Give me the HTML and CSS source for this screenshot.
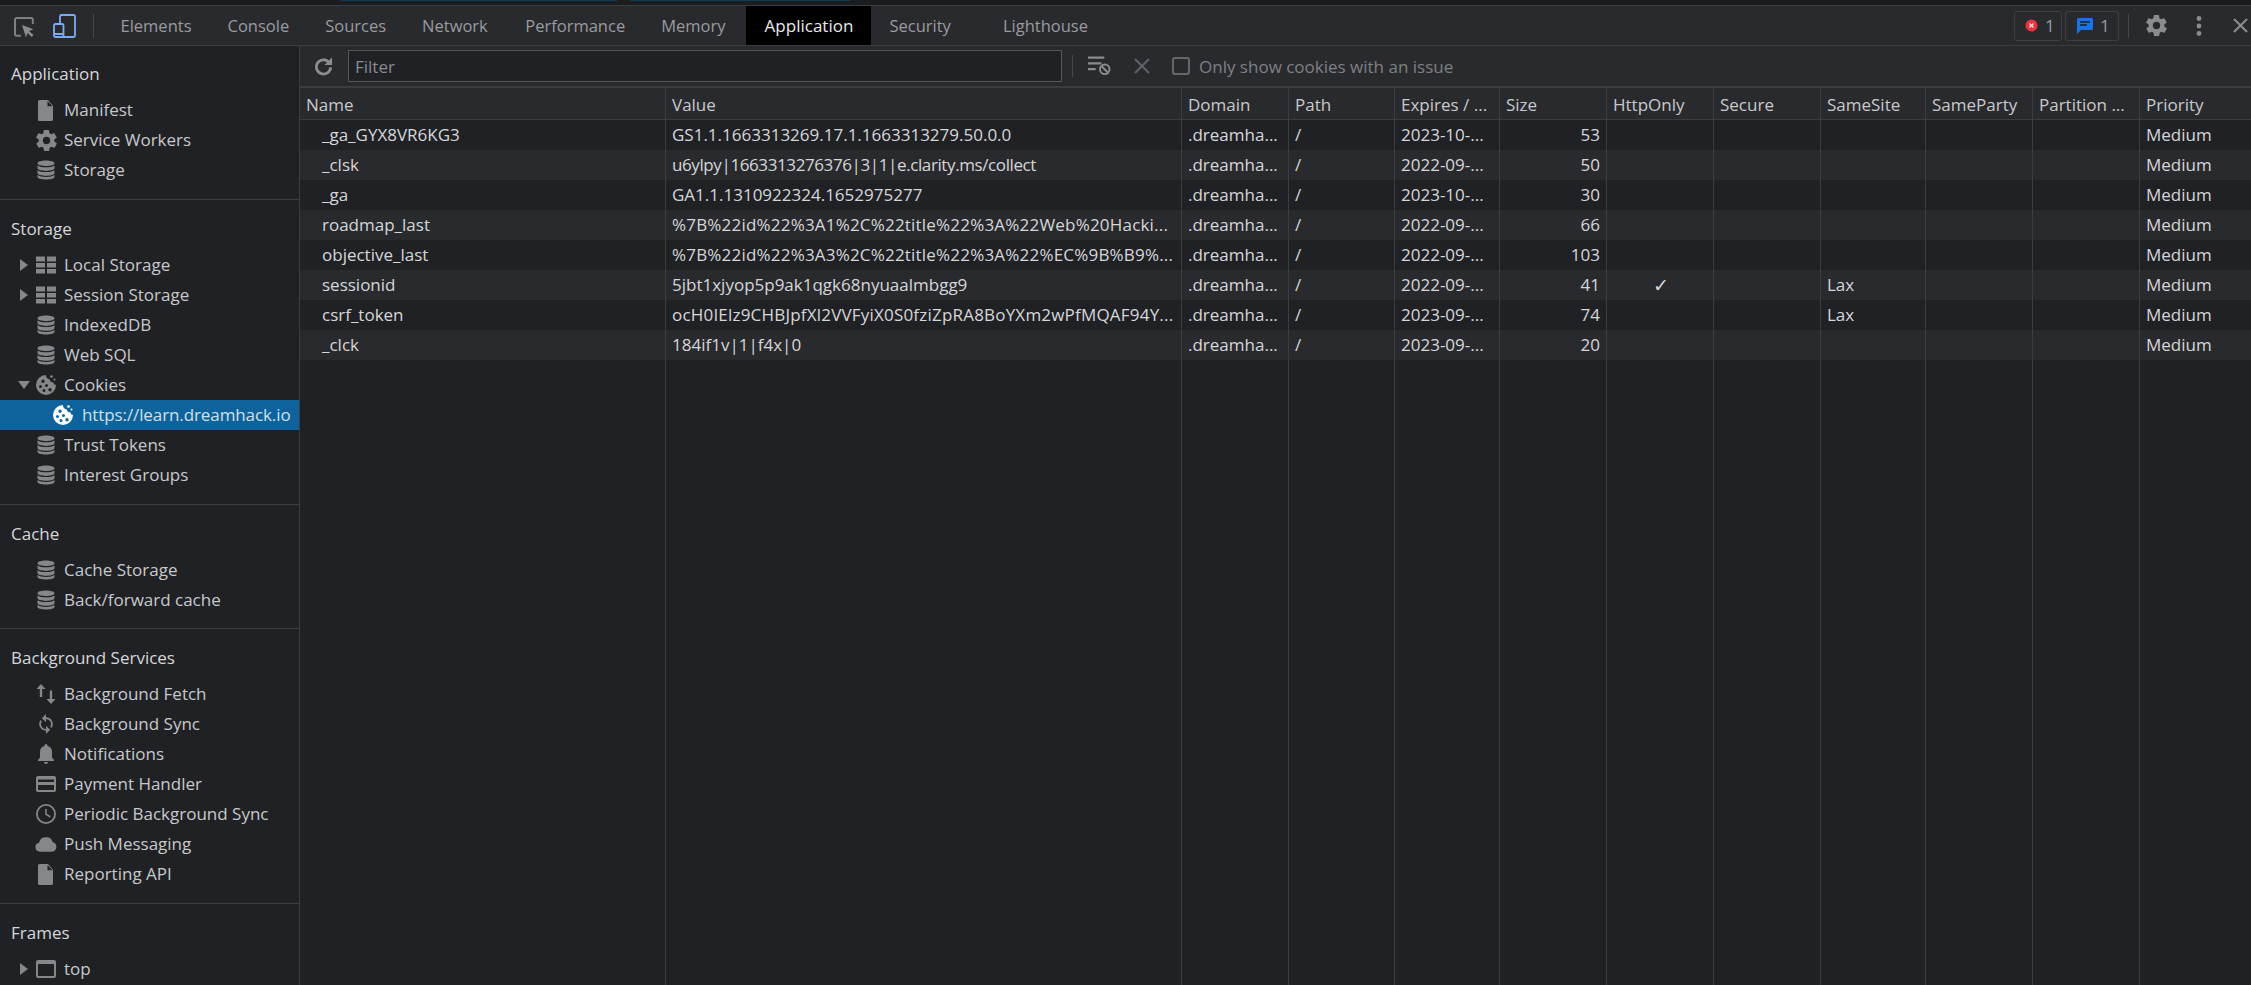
FILE: index.html
```html
<!DOCTYPE html>
<html lang="en">
<head>
<meta charset="utf-8">
<title>DevTools - Application - Cookies</title>
<link rel="stylesheet" href="styles.css">
</head>
<body>
<svg class="defs" aria-hidden="true">
  <symbol id="db" viewBox="0 0 20 20"><path d="M10 .5C5.600 .5 1.500 1.500 1.500 3.300S5.600 6.100 10 6.100s8.500-1 8.500-2.800S14.400 .5 10 .5zM1.500 5.400v2.700c0 1.800 4.100 2.800 8.500 2.800s8.500-1 8.500-2.800V5.400c-1.600 1.300-5 1.900-8.500 1.900s-6.900-.6-8.500-1.900zM1.500 10.200v2.700c0 1.800 4.100 2.800 8.500 2.800s8.500-1 8.500-2.800v-2.700c-1.600 1.300-5 1.900-8.500 1.900s-6.900-.6-8.500-1.900zM1.500 15v1.700c0 1.800 4.100 2.800 8.500 2.800s8.500-1 8.500-2.800V15c-1.600 1.300-5 1.900-8.500 1.900S3.100 16.300 1.500 15z"/></symbol>
  <symbol id="grid" viewBox="0 0 20 20"><path d="M0 1.500h9v5H0zM11 1.500h9v5h-9zM0 8h9v4.500H0zM11 8h9v4.500h-9zM0 14h9v4.500H0zM11 14h9v4.500h-9z"/></symbol>
  <symbol id="doc" viewBox="2 0 15 20" preserveAspectRatio="none"><path d="M3.500 0h8.500l5 5.500v13a1.500 1.500 0 0 1-1.500 1.500h-12A1.500 1.500 0 0 1 2 18.500v-17A1.500 1.500 0 0 1 3.500 0zM11.500 1v5h5z" fill-rule="evenodd"/></symbol>
  <symbol id="gear" viewBox="2 2 20 20"><path d="M19.400 13a7.600 7.600 0 0 0 0-2l2.100-1.600a.5.500 0 0 0 .1-.6l-2-3.500a.5.500 0 0 0-.6-.2l-2.500 1a7.300 7.300 0 0 0-1.700-1l-.4-2.600a.5.500 0 0 0-.5-.5h-4a.5.500 0 0 0-.5.400l-.4 2.700a7.300 7.300 0 0 0-1.700 1l-2.500-1a.5.500 0 0 0-.6.200l-2 3.500a.5.500 0 0 0 .1.600L4.600 11a7.600 7.600 0 0 0 0 2l-2.100 1.600a.5.500 0 0 0-.1.600l2 3.500a.5.500 0 0 0 .6.200l2.500-1a7.300 7.300 0 0 0 1.700 1l.4 2.600a.5.500 0 0 0 .5.500h4a.5.500 0 0 0 .5-.4l.4-2.700a7.300 7.300 0 0 0 1.700-1l2.500 1a.5.500 0 0 0 .6-.2l2-3.500a.5.500 0 0 0-.1-.6zM12 15.500a3.500 3.500 0 1 1 0-7 3.500 3.500 0 0 1 0 7z"/></symbol>
  <symbol id="cookie" viewBox="0 0 20 20"><path fill-rule="evenodd" d="M10 0a10 10 0 1 0 10 10 3 3 0 0 1-2.700-2.700A3.400 3.400 0 0 1 13.700 4.500 4 4 0 0 1 10 0zM7 4.500a1.700 1.700 0 1 1 0 3.400 1.700 1.700 0 0 1 0-3.400zM4.500 10a1.500 1.500 0 1 1 0 3 1.500 1.500 0 0 1 0-3zM10.500 9a1.500 1.500 0 1 1 0 3 1.500 1.500 0 0 1 0-3zM8 14a1.500 1.500 0 1 1 0 3 1.500 1.500 0 0 1 0-3zM14 13a1.700 1.700 0 1 1 0 3.400 1.700 1.700 0 0 1 0-3.400z"/><circle cx="15.500" cy="1.500" r="1.300"/><circle cx="18.500" cy="4.500" r="1"/></symbol>
</svg>
<div class="topstrip"><span class="topaccent a1"></span><span class="topaccent a2"></span></div>
<header class="tabbar">
  <div class="tabtools">
    <svg class="ic-inspect" viewBox="0 0 20 20"><path class="stroke-grey" d="M7 18.800H2.700A1.700 1.700 0 0 1 1 17.100V2.700A1.700 1.700 0 0 1 2.700 1h14.400a1.700 1.700 0 0 1 1.700 1.700V7"/><path class="fill-grey" d="M8 8l11.500 4.300-4.500 1.800 4.500 3.900-1.800 2-4.200-4-1.500 4.500z"/></svg>
    <svg class="ic-device" viewBox="0 0 23 24"><path class="stroke-blue" d="M7 10V2.500A1.500 1.500 0 0 1 8.500 1h12A1.500 1.500 0 0 1 22 2.500v19a1.500 1.500 0 0 1-1.500 1.500H2.500A1.500 1.500 0 0 1 1 21.500V11.500A1.500 1.500 0 0 1 2.500 10H9a1.500 1.500 0 0 1 1.500 1.500V23M1 20h9.500"/></svg>
    <span class="vsep"></span>
  </div>
  <nav class="tabs">
    <span class="tab">Elements</span>
    <span class="tab">Console</span>
    <span class="tab">Sources</span>
    <span class="tab t-network">Network</span>
    <span class="tab">Performance</span>
    <span class="tab t-memory">Memory</span>
    <span class="tab tab-active">Application</span>
    <span class="tab">Security</span>
    <span class="tab t-light">Lighthouse</span>
  </nav>
  <div class="tabright">
    <span class="badge badge-err"><svg class="bi" viewBox="0 0 14 14"><circle cx="7" cy="7" r="6.500" fill="#e8333f"/><path d="M4.800 4.800l4.400 4.400M9.200 4.800L4.800 9.200" stroke="#f4d7d9" stroke-width="1.500"/></svg>1</span>
    <span class="badge badge-msg"><svg class="bi" viewBox="0 0 16 16"><path d="M1.500 0h13A1.500 1.500 0 0 1 16 1.500v9a1.500 1.500 0 0 1-1.500 1.500H4l-4 4V1.500A1.500 1.500 0 0 1 1.500 0z" fill="#1a73e8"/><path d="M3 4h10M3 7h7" stroke="#202124" stroke-width="1.400"/></svg>1</span>
    <span class="vsep vsep-r"></span>
    <svg class="ic-gear fill-grey"><use href="#gear"/></svg>
    <svg class="ic-more" viewBox="0 0 6 20"><circle cx="3" cy="2.500" r="2.400"/><circle cx="3" cy="10" r="2.400"/><circle cx="3" cy="17.500" r="2.400"/></svg>
    <svg class="ic-close" viewBox="0 0 16 16"><path d="M1 1l14 14M15 1L1 15"/></svg>
  </div>
</header>
<main class="body">
  <aside class="side">
    <section class="sec">
      <h2>Application</h2>
      <div class="item"><svg class="ic ic-doc"><use href="#doc"/></svg>Manifest</div>
      <div class="item"><svg class="ic ic-cog"><use href="#gear"/></svg>Service Workers</div>
      <div class="item"><svg class="ic"><use href="#db"/></svg>Storage</div>
    </section>
    <section class="sec">
      <h2>Storage</h2>
      <div class="item"><i class="arrow"></i><svg class="ic"><use href="#grid"/></svg>Local Storage</div>
      <div class="item"><i class="arrow"></i><svg class="ic"><use href="#grid"/></svg>Session Storage</div>
      <div class="item"><svg class="ic"><use href="#db"/></svg>IndexedDB</div>
      <div class="item"><svg class="ic"><use href="#db"/></svg>Web SQL</div>
      <div class="item"><i class="arrow arrow-down"></i><svg class="ic"><use href="#cookie"/></svg>Cookies</div>
      <div class="item item-sel"><svg class="ic"><use href="#cookie"/></svg>https://learn.dreamhack.io</div>
      <div class="item"><svg class="ic"><use href="#db"/></svg>Trust Tokens</div>
      <div class="item"><svg class="ic"><use href="#db"/></svg>Interest Groups</div>
    </section>
    <section class="sec sec-cache">
      <h2>Cache</h2>
      <div class="item"><svg class="ic"><use href="#db"/></svg>Cache Storage</div>
      <div class="item"><svg class="ic"><use href="#db"/></svg>Back/forward cache</div>
    </section>
    <section class="sec">
      <h2>Background Services</h2>
      <div class="item"><svg class="ic" viewBox="0 0 20 20"><path d="M5 0l4.500 5H6.200v8H3.800V5H.5zM15 20l-4.500-5h3.300V6.500h2.400V15h3.300z"/></svg>Background Fetch</div>
      <div class="item"><svg class="ic" viewBox="0 0 24 24"><path d="M12 4V0L7 5l5 5V6a6 6 0 0 1 5.100 9.200l1.500 1.500A8 8 0 0 0 12 4zm0 14a6 6 0 0 1-5.100-9.200L5.400 7.300A8 8 0 0 0 12 20v4l5-5-5-5z"/></svg>Background Sync</div>
      <div class="item"><svg class="ic" viewBox="0 0 20 20"><path d="M10 0a1.500 1.500 0 0 1 1.500 1.500v.6A6 6 0 0 1 16 8v5.500l2 2.500v1H2v-1l2-2.500V8a6 6 0 0 1 4.500-5.900v-.6A1.500 1.500 0 0 1 10 0zM8 18h4a2 2 0 0 1-4 0z"/></svg>Notifications</div>
      <div class="item"><svg class="ic" viewBox="0 0 20 16"><path fill-rule="evenodd" d="M2 0h16a2 2 0 0 1 2 2v12a2 2 0 0 1-2 2H2a2 2 0 0 1-2-2V2a2 2 0 0 1 2-2zm0 3.500v2.500h16V3.500zM2 9v5h16V9z"/></svg>Payment Handler</div>
      <div class="item"><svg class="ic" viewBox="0 0 20 20"><path fill-rule="evenodd" d="M10 0a10 10 0 1 0 0 20 10 10 0 0 0 0-20zm0 1.800a8.200 8.200 0 1 1 0 16.400 8.200 8.200 0 0 1 0-16.400zM9.200 5v5.700l4.600 2.700.8-1.300-3.900-2.300V5z"/></svg>Periodic Background Sync</div>
      <div class="item"><svg class="ic ic-cloud" viewBox="0 0 22 14.500"><path d="M11 0a6.300 6.300 0 0 1 6.600 4.700A5 5 0 0 1 17 14.500H5a4.600 4.600 0 0 1-.9-9.100A6.900 6.900 0 0 1 11 0z"/></svg>Push Messaging</div>
      <div class="item"><svg class="ic ic-doc"><use href="#doc"/></svg>Reporting API</div>
    </section>
    <section class="sec">
      <h2>Frames</h2>
      <div class="item"><i class="arrow"></i><svg class="ic" viewBox="0 0 20 18"><path fill-rule="evenodd" d="M2 0h16a2 2 0 0 1 2 2v14a2 2 0 0 1-2 2H2a2 2 0 0 1-2-2V2a2 2 0 0 1 2-2zm0 4v12h16V4z"/></svg>top</div>
    </section>
  </aside>
  <div class="panel">
    <div class="filterbar">
      <svg class="ic-refresh" viewBox="0 0 20 20"><path class="refresh-arc" d="M15.500 5.300A7.500 7.500 0 1 0 17.500 11"/><path d="M19 .5v8h-8z"/></svg>
      <div class="filter">Filter</div>
      <span class="vsep vsep-f"></span>
      <svg class="ic-clear" viewBox="0 0 24 20"><path d="M0 0h17v2.500H0zM0 6h14v2.500H0zM0 12h8v2.500H0z"/><circle cx="17.500" cy="13.500" r="5" fill="none" stroke-width="2"/><path d="M14 10l7 7" fill="none" stroke-width="2"/></svg>
      <svg class="ic-x" viewBox="0 0 16 16"><path d="M1 1l14 14M15 1L1 15"/></svg>
      <span class="check"></span>
      <span class="checklabel">Only show cookies with an issue</span>
    </div>
    <div class="grid">
      <div class="cols">
        <span class="c"></span><span class="c"></span><span class="c"></span><span class="c"></span><span class="c"></span><span class="c"></span><span class="c"></span><span class="c"></span><span class="c"></span><span class="c"></span><span class="c"></span><span class="c c-last"></span>
      </div>
      <div class="row head">
        <span class="cell">Name</span><span class="cell">Value</span><span class="cell">Domain</span><span class="cell">Path</span><span class="cell">Expires / ...</span><span class="cell">Size</span><span class="cell">HttpOnly</span><span class="cell">Secure</span><span class="cell">SameSite</span><span class="cell">SameParty</span><span class="cell">Partition ...</span><span class="cell">Priority</span>
      </div>
      <div class="row"><span class="cell name">_ga_GYX8VR6KG3</span><span class="cell">GS1.1.1663313269.17.1.1663313279.50.0.0</span><span class="cell">.dreamha...</span><span class="cell">/</span><span class="cell">2023-10-...</span><span class="cell num">53</span><span class="cell"></span><span class="cell"></span><span class="cell"></span><span class="cell"></span><span class="cell"></span><span class="cell">Medium</span></div>
      <div class="row"><span class="cell name">_clsk</span><span class="cell tight">u6ylpy|1663313276376|3|1|e.clarity.ms/collect</span><span class="cell">.dreamha...</span><span class="cell">/</span><span class="cell">2022-09-...</span><span class="cell num">50</span><span class="cell"></span><span class="cell"></span><span class="cell"></span><span class="cell"></span><span class="cell"></span><span class="cell">Medium</span></div>
      <div class="row"><span class="cell name">_ga</span><span class="cell">GA1.1.1310922324.1652975277</span><span class="cell">.dreamha...</span><span class="cell">/</span><span class="cell">2023-10-...</span><span class="cell num">30</span><span class="cell"></span><span class="cell"></span><span class="cell"></span><span class="cell"></span><span class="cell"></span><span class="cell">Medium</span></div>
      <div class="row"><span class="cell name">roadmap_last</span><span class="cell wide">%7B%22id%22%3A1%2C%22title%22%3A%22Web%20Hacki...</span><span class="cell">.dreamha...</span><span class="cell">/</span><span class="cell">2022-09-...</span><span class="cell num">66</span><span class="cell"></span><span class="cell"></span><span class="cell"></span><span class="cell"></span><span class="cell"></span><span class="cell">Medium</span></div>
      <div class="row"><span class="cell name">objective_last</span><span class="cell wide">%7B%22id%22%3A3%2C%22title%22%3A%22%EC%9B%B9%...</span><span class="cell">.dreamha...</span><span class="cell">/</span><span class="cell">2022-09-...</span><span class="cell num">103</span><span class="cell"></span><span class="cell"></span><span class="cell"></span><span class="cell"></span><span class="cell"></span><span class="cell">Medium</span></div>
      <div class="row"><span class="cell name">sessionid</span><span class="cell">5jbt1xjyop5p9ak1qgk68nyuaalmbgg9</span><span class="cell">.dreamha...</span><span class="cell">/</span><span class="cell">2022-09-...</span><span class="cell num">41</span><span class="cell ctr">✓</span><span class="cell"></span><span class="cell">Lax</span><span class="cell"></span><span class="cell"></span><span class="cell">Medium</span></div>
      <div class="row"><span class="cell name">csrf_token</span><span class="cell wide">ocH0IElz9CHBJpfXl2VVFyiX0S0fziZpRA8BoYXm2wPfMQAF94Y...</span><span class="cell">.dreamha...</span><span class="cell">/</span><span class="cell">2023-09-...</span><span class="cell num">74</span><span class="cell"></span><span class="cell"></span><span class="cell">Lax</span><span class="cell"></span><span class="cell"></span><span class="cell">Medium</span></div>
      <div class="row"><span class="cell name">_clck</span><span class="cell">184if1v|1|f4x|0</span><span class="cell">.dreamha...</span><span class="cell">/</span><span class="cell">2023-09-...</span><span class="cell num">20</span><span class="cell"></span><span class="cell"></span><span class="cell"></span><span class="cell"></span><span class="cell"></span><span class="cell">Medium</span></div>
    </div>
  </div>
</main>
</body>
</html>
```

FILE: styles.css
```css
* { box-sizing: border-box; }
html, body { margin: 0; height: 100%; }
body {
  width: 2251px; height: 985px; overflow: hidden;
  background: #202125; color: #d6d7d9;
  font-family: "Open Sans", "Noto Sans", sans-serif;
  font-size: 17px;
  display: flex; flex-direction: column;
}
.defs { width: 0; height: 0; position: absolute; }
.topstrip { height: 5px; background: #1b1c20; display: flex; flex: none; }
.topaccent { height: 1px; background: #0f3a52; }
.a1 { margin-left: 340px; width: 277px; }
.a2 { margin-left: 13px; width: 220px; }
.tabbar { height: 41px; flex: none; display: flex; align-items: center; background: #292a2e; border-top: 1px solid #3c3d41; border-bottom: 1px solid #3c3d41; }
.tabtools { display: flex; align-items: center; width: 102.500px; flex: none; padding-left: 14px; }
.ic-inspect { width: 20px; height: 20px; flex: none; margin-top: 3px; }
.stroke-grey { fill: none; stroke: #7e7f83; stroke-width: 2; }
.fill-grey { fill: #8b8c90; }
.ic-device { width: 23px; height: 24px; margin-left: 19px; flex: none; }
.stroke-blue { fill: none; stroke: #7cacf8; stroke-width: 1.800; }
.vsep { width: 1px; height: 24px; background: #46474b; margin-left: 17px; flex: none; }
.tabs { display: flex; align-items: center; height: 100%; flex: none; color: #9a9b9f; font-size: 16.500px; }
.tab { display: flex; align-items: center; height: 100%; white-space: nowrap; padding: 0 18px; }
.t-network { margin-right: 1.500px; }
.t-memory { margin-right: 3px; }
.tab-active { background: #000; color: #e8e9eb; width: 125px; justify-content: center; padding: 0; font-size: 17px; }
.t-light { margin-left: 16px; }
.tabright { margin-left: auto; display: flex; align-items: center; flex: none; padding-right: 3px; }
.badge { height: 30px; display: flex; align-items: center; gap: 7px; border: 1px solid #3f4044; border-radius: 3px; padding: 0 10px; color: #9a9b9f; }
.badge-err { width: 48px; margin-right: 3px; }
.badge-msg { width: 54px; padding-left: 11px; }
.bi { width: 13px; height: 13px; flex: none; }
.badge-msg .bi { width: 16px; height: 16px; }
.vsep-r { margin-left: 9px; margin-right: 17px; }
.ic-gear { width: 21px; height: 21px; margin-right: 29px; }
.ic-more { width: 6px; height: 20px; fill: #8b8c90; margin-right: 31px; }
.ic-close { width: 15px; height: 15px; stroke: #8b8c90; stroke-width: 2.200; fill: none; }
.body { flex: 1; min-height: 0; display: flex; }
.side { width: 300px; flex: none; border-right: 1px solid #3c3d41; background: #202125; overflow: hidden; }
.sec { padding-bottom: 14px; border-top: 1px solid #3c3d41; }
.sec:first-child { border-top: 0; }
.sec-cache { padding-bottom: 13px; }
.sec h2 { margin: 0; padding: 14px 0 6px 11px; height: 50px; line-height: 30px; font-size: 17px; font-weight: 400; color: #d6d7d9; }
.sec:first-child h2 { height: 49px; padding-top: 13px; }
.item { height: 30px; display: flex; align-items: center; padding: 0 0 2px 36px; position: relative; color: #c8c9cb; white-space: nowrap; }
.ic { width: 20px; height: 20px; fill: #86878b; margin: 2px 8px 0 0; flex: none; }
.ic-doc { width: 15px; height: 21px; margin-left: 2px; margin-right: 11px; }
.ic-cog { width: 21px; height: 21px; margin-right: 7px; }
.ic-cloud { width: 22px; height: 15px; margin-left: -1px; margin-right: 7px; }
.arrow { position: absolute; left: 20px; top: 9px; width: 0; height: 0; border-left: 8px solid #86878b; border-top: 6px solid transparent; border-bottom: 6px solid transparent; }
.arrow-down { left: 18px; top: 11px; border-left: 6px solid transparent; border-right: 6px solid transparent; border-top: 8px solid #86878b; border-bottom: 0; }
.item-sel { background: #0e639c; color: #cfe0ec; padding-left: 53px; letter-spacing: -.1px; }
.item-sel .ic { fill: #fff; margin-right: 9px; }
.panel { flex: 1; min-width: 0; display: flex; flex-direction: column; }
.filterbar { height: 42px; flex: none; display: flex; align-items: center; background: #292a2e; border-bottom: 2px solid #3c3d41; padding-left: 14px; color: #8a8b8f; }
.ic-refresh { width: 19px; height: 19px; fill: #8b8c90; flex: none; }
.refresh-arc { fill: none; stroke: #8b8c90; stroke-width: 3; }
.filter { margin-left: 15px; width: 714px; height: 32px; border: 1px solid #55565a; background: #202125; color: #8a8b8f; padding-left: 6px; line-height: 31px; flex: none; }
.vsep-f { margin-left: 10px; height: 22px; }
.ic-clear { width: 23px; height: 20px; fill: #8b8c90; stroke: #8b8c90; stroke-width: 0; margin-left: 15px; flex: none; }
.ic-x { width: 16px; height: 16px; stroke: #5f6064; stroke-width: 2.200; fill: none; margin-left: 23px; flex: none; }
.check { width: 18px; height: 18px; border: 2px solid #66676b; border-radius: 3px; margin-left: 22px; flex: none; }
.checklabel { margin-left: 9px; color: #7f8084; }
.grid { flex: 1; position: relative; min-height: 0; --cols: 366px 516px 107px 106px 105px 107px 107px 107px 105px 107px 107px 1fr; }
.row { display: grid; grid-template-columns: var(--cols); height: 30px; color: #d6d7d9; }
.cols { position: absolute; inset: 0; display: grid; grid-template-columns: var(--cols); pointer-events: none; }
.c { border-right: 1px solid #3c3d41; }
.c-last { border-right: 0; }
.row:nth-child(odd) { background: #202125; }
.row:nth-child(even) { background: #292a2e; }
.row.head { height: 32px; background: #292a2e; border-bottom: 1px solid #3c3d41; color: #c8c9cb; }
.cell { padding: 0 6px; line-height: 30px; white-space: nowrap; overflow: hidden; min-width: 0; }
.head .cell { line-height: 33px; }
.name { padding-left: 22px; }
.num { text-align: right; padding-right: 7px; }
.ctr { text-align: center; font-size: 19px; }
.tight { letter-spacing: -.4px; }
.wide { letter-spacing: .2px; }
```
